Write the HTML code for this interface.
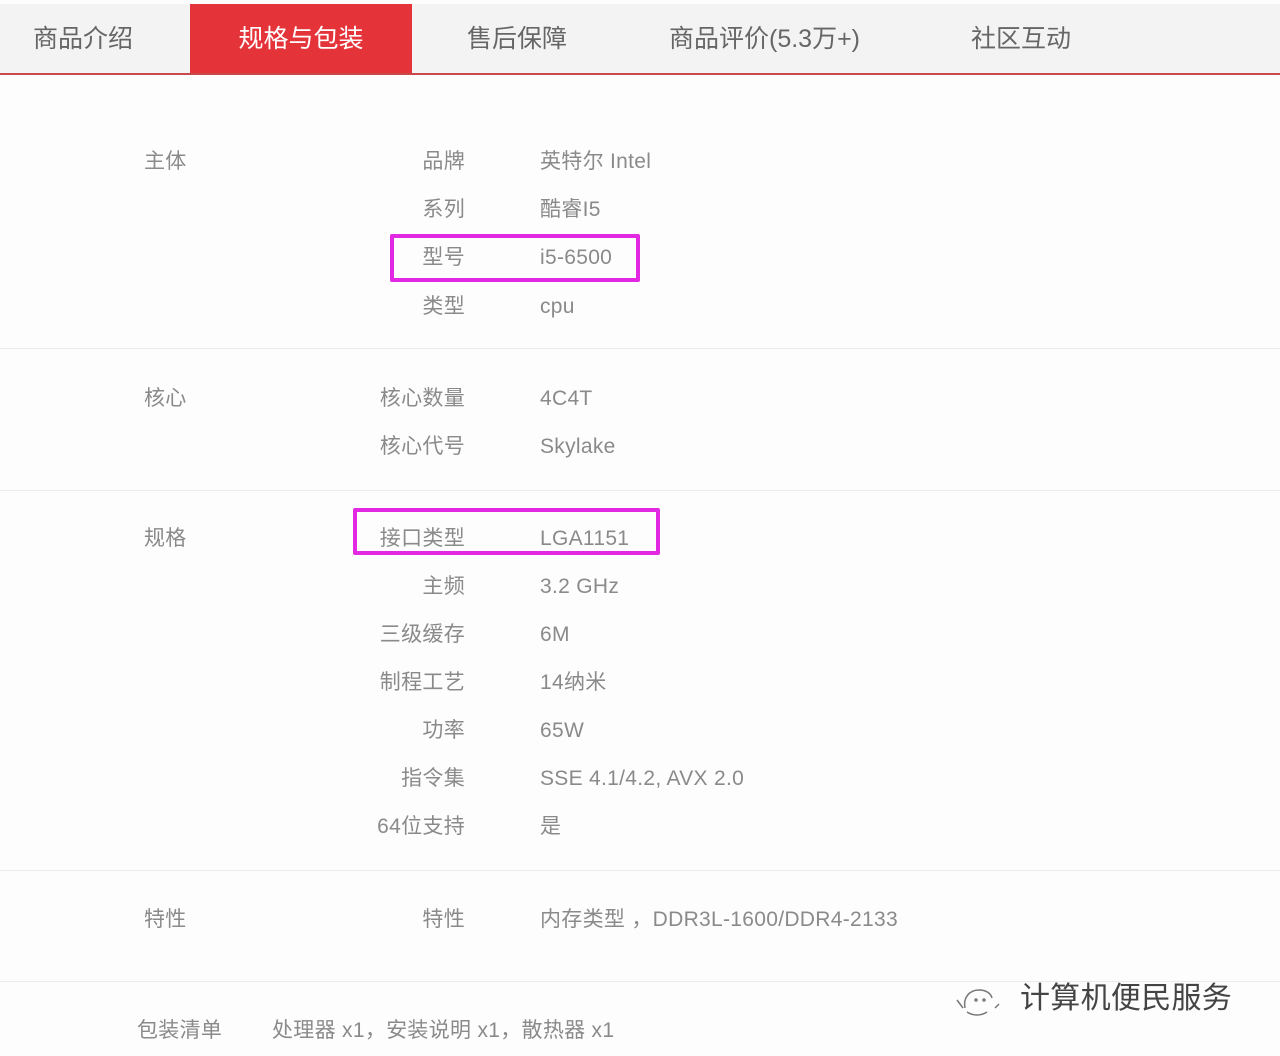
<!DOCTYPE html>
<html><head><meta charset="utf-8"><style>
body{margin:0;width:1280px;height:1056px;background:#fdfdfd;position:relative;overflow:hidden;font-family:"Liberation Sans","Noto Sans CJK SC",sans-serif;color:#8a8a8a}
.bar{position:absolute;left:0;top:4px;width:1280px;height:69px;background:#f3f3f3}
.line{position:absolute;left:0;top:73px;width:1280px;height:2px;background:#c9484c}
.tab{position:absolute;top:4px;height:70px;line-height:70px;font-size:25px;color:#666;white-space:nowrap}
.act{background:#e4343a;color:#fff;left:190px;width:222px;text-align:center}
.t{position:absolute;font-size:21px;line-height:24px;white-space:nowrap;letter-spacing:0.3px}
.c{left:144px}
.l{right:815px;text-align:right}
.v{left:540px}
.sep{position:absolute;left:0;width:1280px;height:1px;background:#ebebeb}
.box{position:absolute;border:4px solid #e228e2;border-radius:2px}
</style></head><body>
<div class="bar"></div>
<div class="tab" style="left:33px">商品介绍</div>
<div class="tab act">规格与包装</div>
<div class="tab" style="left:467px">售后保障</div>
<div class="tab" style="left:669px">商品评价(5.3万+)</div>
<div class="tab" style="left:971px">社区互动</div>
<div class="line"></div>

<div class="t c" style="top:150px">主体</div>
<div class="t l" style="top:150px">品牌</div><div class="t v" style="top:150px">英特尔 Intel</div>
<div class="t l" style="top:198px">系列</div><div class="t v" style="top:198px">酷睿I5</div>
<div class="t l" style="top:246px">型号</div><div class="t v" style="top:246px">i5-6500</div>
<div class="t l" style="top:295px">类型</div><div class="t v" style="top:295px">cpu</div>
<div class="box" style="left:390px;top:234px;width:242px;height:40px"></div>
<div class="sep" style="top:348px"></div>

<div class="t c" style="top:387px">核心</div>
<div class="t l" style="top:387px">核心数量</div><div class="t v" style="top:387px">4C4T</div>
<div class="t l" style="top:435px">核心代号</div><div class="t v" style="top:435px">Skylake</div>
<div class="sep" style="top:490px"></div>

<div class="t c" style="top:527px">规格</div>
<div class="t l" style="top:527px">接口类型</div><div class="t v" style="top:527px">LGA1151</div>
<div class="box" style="left:353px;top:508px;width:299px;height:39px"></div>
<div class="t l" style="top:575px">主频</div><div class="t v" style="top:575px">3.2 GHz</div>
<div class="t l" style="top:623px">三级缓存</div><div class="t v" style="top:623px">6M</div>
<div class="t l" style="top:671px">制程工艺</div><div class="t v" style="top:671px">14纳米</div>
<div class="t l" style="top:719px">功率</div><div class="t v" style="top:719px">65W</div>
<div class="t l" style="top:767px">指令集</div><div class="t v" style="top:767px">SSE 4.1/4.2, AVX 2.0</div>
<div class="t l" style="top:815px">64位支持</div><div class="t v" style="top:815px">是</div>
<div class="sep" style="top:870px"></div>

<div class="t c" style="top:908px">特性</div>
<div class="t l" style="top:908px">特性</div><div class="t v" style="top:908px">内存类型 ，DDR3L-1600/DDR4-2133</div>
<div class="sep" style="top:981px"></div>

<div class="t" style="left:137px;top:1019px">包装清单</div>
<div class="t" style="left:272px;top:1019px">处理器 x1，安装说明 x1，散热器 x1</div>

<svg style="position:absolute;left:955px;top:982px" width="50" height="40" viewBox="0 0 50 40" fill="none" stroke="#777" stroke-width="1.5">
<path d="M10 26 C8 16 14 8 24 8 C32 8 36 12 37 16"/><path d="M12 30 C18 34 26 34 32 30"/><circle cx="21" cy="18" r="1"/><circle cx="29" cy="18" r="1"/><path d="M2 18 L8 26"/><path d="M40 26 L44 22"/></svg>
<div class="t" style="left:1020px;top:982px;font-size:30px;line-height:34px;color:#444">计算机便民服务</div>
</body></html>
